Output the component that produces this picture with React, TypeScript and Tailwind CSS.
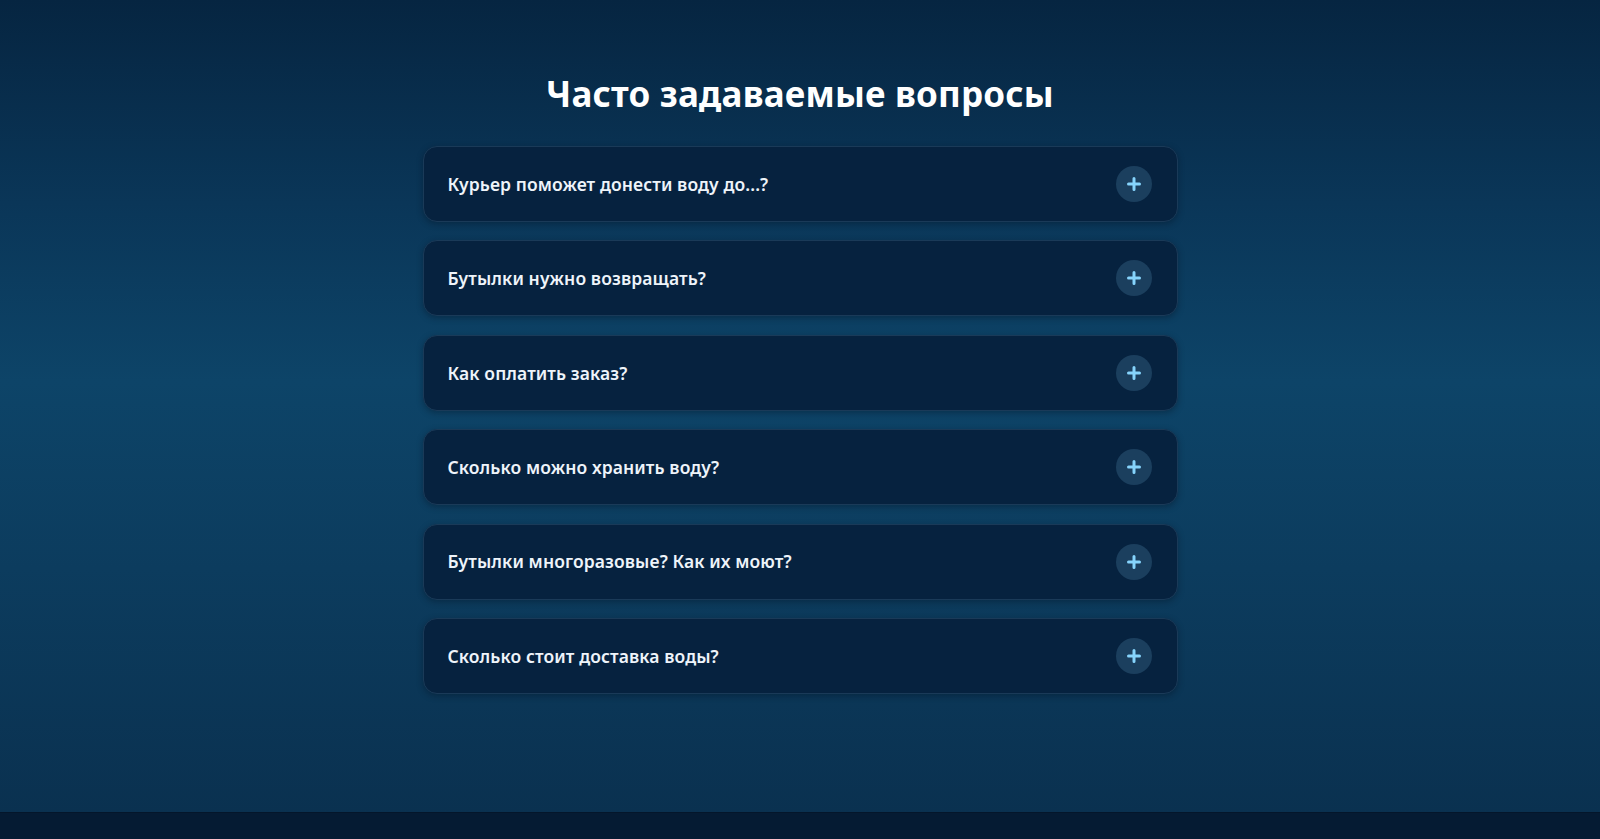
const questions = [
  "Курьер поможет донести воду до...?",
  "Бутылки нужно возвращать?",
  "Как оплатить заказ?",
  "Сколько можно хранить воду?",
  "Бутылки многоразовые? Как их моют?",
  "Сколько стоит доставка воды?",
];

function PlusIcon() {
  return (
    <svg width="14" height="14" viewBox="0 0 14 14" fill="none">
      <path d="M7 1.5v11M1.5 7h11" stroke="#86d4fc" strokeWidth="3" strokeLinecap="round" />
    </svg>
  );
}

function FaqItem({ text }: { text: string }) {
  return (
    <button className="w-full h-[76px] flex items-center justify-between pl-[24px] pr-[25px] rounded-[14px] bg-[#06223f] border border-[#1a3a58] shadow-[0_2px_6px_rgba(2,14,30,0.35)] text-left">
      <span className="text-[17.5px] font-semibold text-[#eef4fa] tracking-[0.1px]">{text}</span>
      <span className="w-9 h-9 rounded-full bg-[#1b3f5e] flex items-center justify-center">
        <PlusIcon />
      </span>
    </button>
  );
}

export default function App() {
  return (
    <div className="min-h-screen flex flex-col font-['Noto_Sans',sans-serif]">
      <section className="h-[812px] bg-[linear-gradient(180deg,#062541_0%,#0a3658_25%,#0d4468_47%,#0c3c5e_70%,#0a3150_100%)] flex flex-col items-center pt-[70px]">
        <h2 className="text-[35px] leading-[48px] font-bold text-white tracking-[0.2px]">
          Часто задаваемые вопросы
        </h2>
        <div className="w-[755px] mt-[28px] flex flex-col gap-[18.4px]">
          {questions.map((q) => (
            <FaqItem key={q} text={q} />
          ))}
        </div>
      </section>
      <footer className="h-[27px] bg-[#051b33] border-t border-[#04162b]" />
    </div>
  );
}
